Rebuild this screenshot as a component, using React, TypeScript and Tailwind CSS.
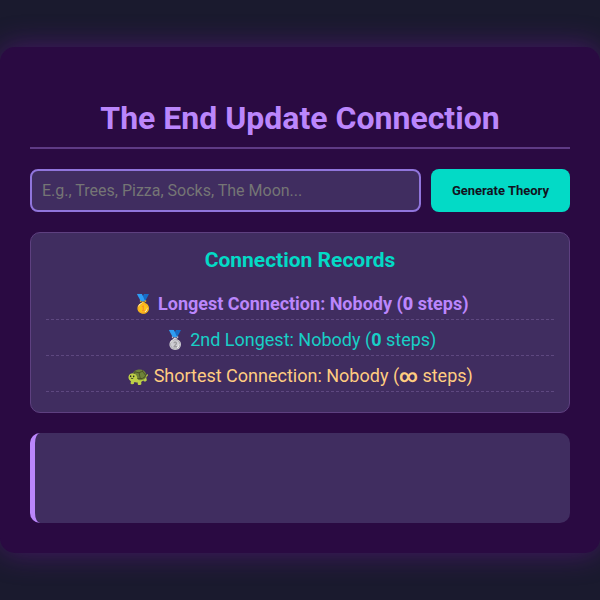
import { useState } from 'react'

const RECORDS = [
  { icon: '🥇', label: 'Longest Connection', holder: 'Nobody', steps: '0', style: 'text-[#bb86fc] font-bold' },
  { icon: '🥈', label: '2nd Longest', holder: 'Nobody', steps: '0', style: 'text-[#18cfc6]' },
  { icon: '🐢', label: 'Shortest Connection', holder: 'Nobody', steps: '∞', style: 'text-[#ffcc80]' },
]

export default function App() {
  const [topic, setTopic] = useState('')
  const [theory, setTheory] = useState('')

  const generate = () => {
    if (topic.trim()) setTheory(`${topic.trim()} → The End Update`)
  }

  return (
    <div className="min-h-screen flex items-center justify-center bg-[#1a1a2e] font-[Roboto,sans-serif] text-[#e0e0e0]">
      <main className="w-full max-w-[800px] p-[30px] rounded-[15px] bg-[#2a0a42] shadow-[0_0_30px_rgba(138,20,190,0.4)]">
        <h1 className="mt-[22px] mb-5 pb-[10px] border-b-2 border-[#5e3a85] text-center text-[32px] leading-[38px] font-bold text-[#bb86fc]">
          The End Update Connection
        </h1>

        {/* Topic input */}
        <form className="flex gap-[10px] mb-5" onSubmit={e => { e.preventDefault(); generate() }}>
          <input type="text" aria-label="Topic" value={topic} onChange={e => setTopic(e.target.value)} placeholder="E.g., Trees, Pizza, Socks, The Moon..."
            className="flex-1 min-w-0 p-[10px] border-2 border-[#9075dc] rounded-lg bg-[#402d60] text-base leading-[19px] text-white placeholder-[#757575] focus:outline-none" />
          <button type="submit" className="px-[21px] rounded-lg bg-[#03dac6] text-[13px] font-bold text-[#121220] hover:bg-[#00bfa5] transition-colors">
            Generate Theory
          </button>
        </form>

        {/* Records */}
        <section className="mb-5 p-[15px] rounded-[10px] border border-[#5e4080] bg-[#402d60] text-center">
          <h2 className="mb-[17px] text-[21px] leading-6 font-bold text-[#03dac6]">Connection Records</h2>
          {RECORDS.map(r => (
            <p key={r.label} className={`mb-[5px] py-[5px] border-b border-dashed border-[#5e4880] text-lg leading-5 ${r.style}`}>
              {r.icon} {r.label}: {r.holder} (<strong>{r.steps}</strong> steps)
            </p>
          ))}
        </section>

        {/* Theory output */}
        <output className="block min-h-[90px] p-5 rounded-[10px] border-l-[5px] border-[#bb86fc] bg-[#402d60]">{theory}</output>
      </main>
    </div>
  )
}
